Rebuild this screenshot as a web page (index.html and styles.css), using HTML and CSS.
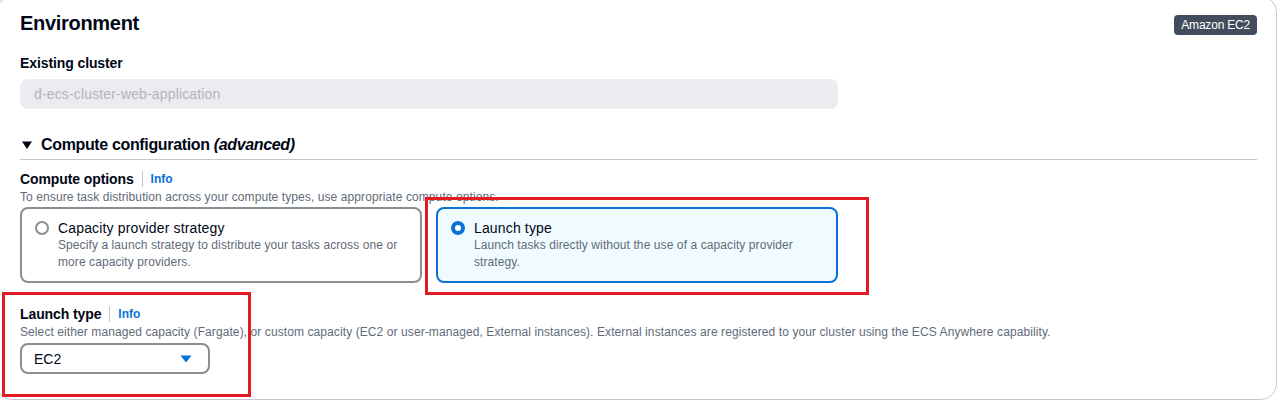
FILE: index.html
```html
<!DOCTYPE html>
<html>
<head>
<meta charset="utf-8">
<link rel="stylesheet" href="styles.css">
</head>
<body>
<div class="card">
  <div class="header">
    <h2 class="title">Environment</h2>
    <span class="badge">Amazon EC2</span>
  </div>

  <div class="field">
    <div class="label">Existing cluster</div>
    <div class="input disabled">d-ecs-cluster-web-application</div>
  </div>

  <div class="expander">
    <svg class="caret" width="12" height="10" viewBox="0 0 12 10"><path d="M1 1.5 L11 1.5 L6 9 Z" fill="#000716"/></svg>
    <span>Compute configuration <em>(advanced)</em></span>
  </div>

  <div class="field">
    <div class="label-row"><span class="label">Compute options</span><span class="sep"></span><a class="info">Info</a></div>
    <div class="desc">To ensure task distribution across your compute types, use appropriate compute options.</div>
    <div class="tiles">
      <div class="tile">
        <span class="radio"></span>
        <div class="tile-body">
          <div class="tile-title">Capacity provider strategy</div>
          <div class="tile-desc">Specify a launch strategy to distribute your tasks across one or more capacity providers.</div>
        </div>
      </div>
      <div class="tile selected">
        <span class="radio checked"></span>
        <div class="tile-body">
          <div class="tile-title">Launch type</div>
          <div class="tile-desc">Launch tasks directly without the use of a capacity provider strategy.</div>
        </div>
      </div>
    </div>
  </div>

  <div class="field">
    <div class="label-row"><span class="label">Launch type</span><span class="sep"></span><a class="info">Info</a></div>
    <div class="desc">Select either managed capacity (Fargate), or custom capacity (EC2 or user-managed, External instances). External instances are registered to your cluster using the ECS Anywhere capability.</div>
    <div class="select">
      <span>EC2</span>
      <svg width="12" height="8" viewBox="0 0 12 8"><path d="M0.5 0.5 L11.5 0.5 L6 7.5 Z" fill="#0972d3"/></svg>
    </div>
  </div>
</div>

<div class="highlight hl-1"></div>
<div class="highlight hl-2"></div>
</body>
</html>
```

FILE: styles.css
```css
* { box-sizing: border-box; }
html, body { margin: 0; padding: 0; background: #ffffff; }
body {
  font-family: "Liberation Sans", Arial, sans-serif;
  color: #000716;
  width: 1279px;
  height: 402px;
  overflow: hidden;
  position: relative;
}
.card {
  margin: -4px 0 0 -4px;
  width: 1281px;
  height: 404px;
  border: 1px solid #c6c6cd;
  border-radius: 16px;
  padding: 14px 19px 0 23px;
  background: #fff;
}
.header {
  display: flex;
  justify-content: space-between;
  align-items: flex-start;
}
.title {
  margin: 0;
  font-size: 20px;
  line-height: 24px;
  font-weight: 700;
  letter-spacing: -0.3px;
}
.badge {
  margin-top: 4px;
  background: #414d5c;
  color: #fff;
  font-size: 12px;
  line-height: 20px;
  padding: 0 7px;
  border-radius: 4px;
  letter-spacing: -0.2px;
}
.field { margin-top: 19px; }
.label {
  font-size: 14px;
  font-weight: 700;
  line-height: 18px;
  letter-spacing: -0.1px;
}
.input {
  margin-top: 7px;
  width: 818px;
  height: 30px;
  border-radius: 8px;
  background: #ebebf0;
  color: #b4b4bb;
  font-size: 14px;
  line-height: 30px;
  padding-left: 14px;
  letter-spacing: 0.15px;
}
.expander {
  margin-top: 26px;
  display: flex;
  align-items: center;
  gap: 8px;
  font-size: 16px;
  font-weight: 700;
  line-height: 20px;
  padding: 0 0 4px 1px;
  border-bottom: 1px solid #c6c6cd;
  letter-spacing: -0.35px;
}
.expander em { font-style: italic; }
.expander + .field { margin-top: 9px; }
.label-row { display: flex; align-items: center; height: 20px; }
.sep {
  width: 1px;
  height: 16px;
  background: #c6c6cd;
  margin: 0 8px;
}
.info {
  color: #0972d3;
  font-weight: 700;
  font-size: 12px;
}
.desc {
  font-size: 12px;
  line-height: 16px;
  color: #5f6b7a;
  letter-spacing: 0.09px;
}
.tiles {
  margin-top: 2px;
  display: flex;
  gap: 14px;
}
.tile {
  width: 402px;
  height: 76px;
  border: 2px solid #8c8c94;
  border-radius: 8px;
  padding: 10px 14px 10px 13px;
  display: flex;
  gap: 9px;
  align-items: flex-start;
}
.tile.selected {
  border-color: #0972d3;
  background: #f0fbff;
}
.radio {
  flex: none;
  width: 14px;
  height: 14px;
  border: 2px solid #8c8c94;
  border-radius: 50%;
  margin-top: 2px;
  background: #fff;
}
.radio.checked {
  border: 4px solid #0972d3;
}
.tile-title {
  font-size: 14px;
  line-height: 18px;
  letter-spacing: 0.15px;
}
.tile-desc {
  font-size: 12px;
  line-height: 17px;
  color: #5f6b7a;
  letter-spacing: 0.09px;
}
.field:last-child { margin-top: 21px; }
.select {
  margin-top: 3px;
  width: 190px;
  height: 31px;
  border: 2px solid #8c8c94;
  border-radius: 8px;
  display: flex;
  align-items: center;
  justify-content: space-between;
  padding: 0 16px 0 12px;
  font-size: 14px;
}
.highlight {
  position: absolute;
  border: 3px solid #e41b23;
  pointer-events: none;
}
.hl-1 { left: 425px; top: 197px; width: 444px; height: 98px; }
.hl-2 { left: 2px; top: 292px; width: 249px; height: 105px; }
```
